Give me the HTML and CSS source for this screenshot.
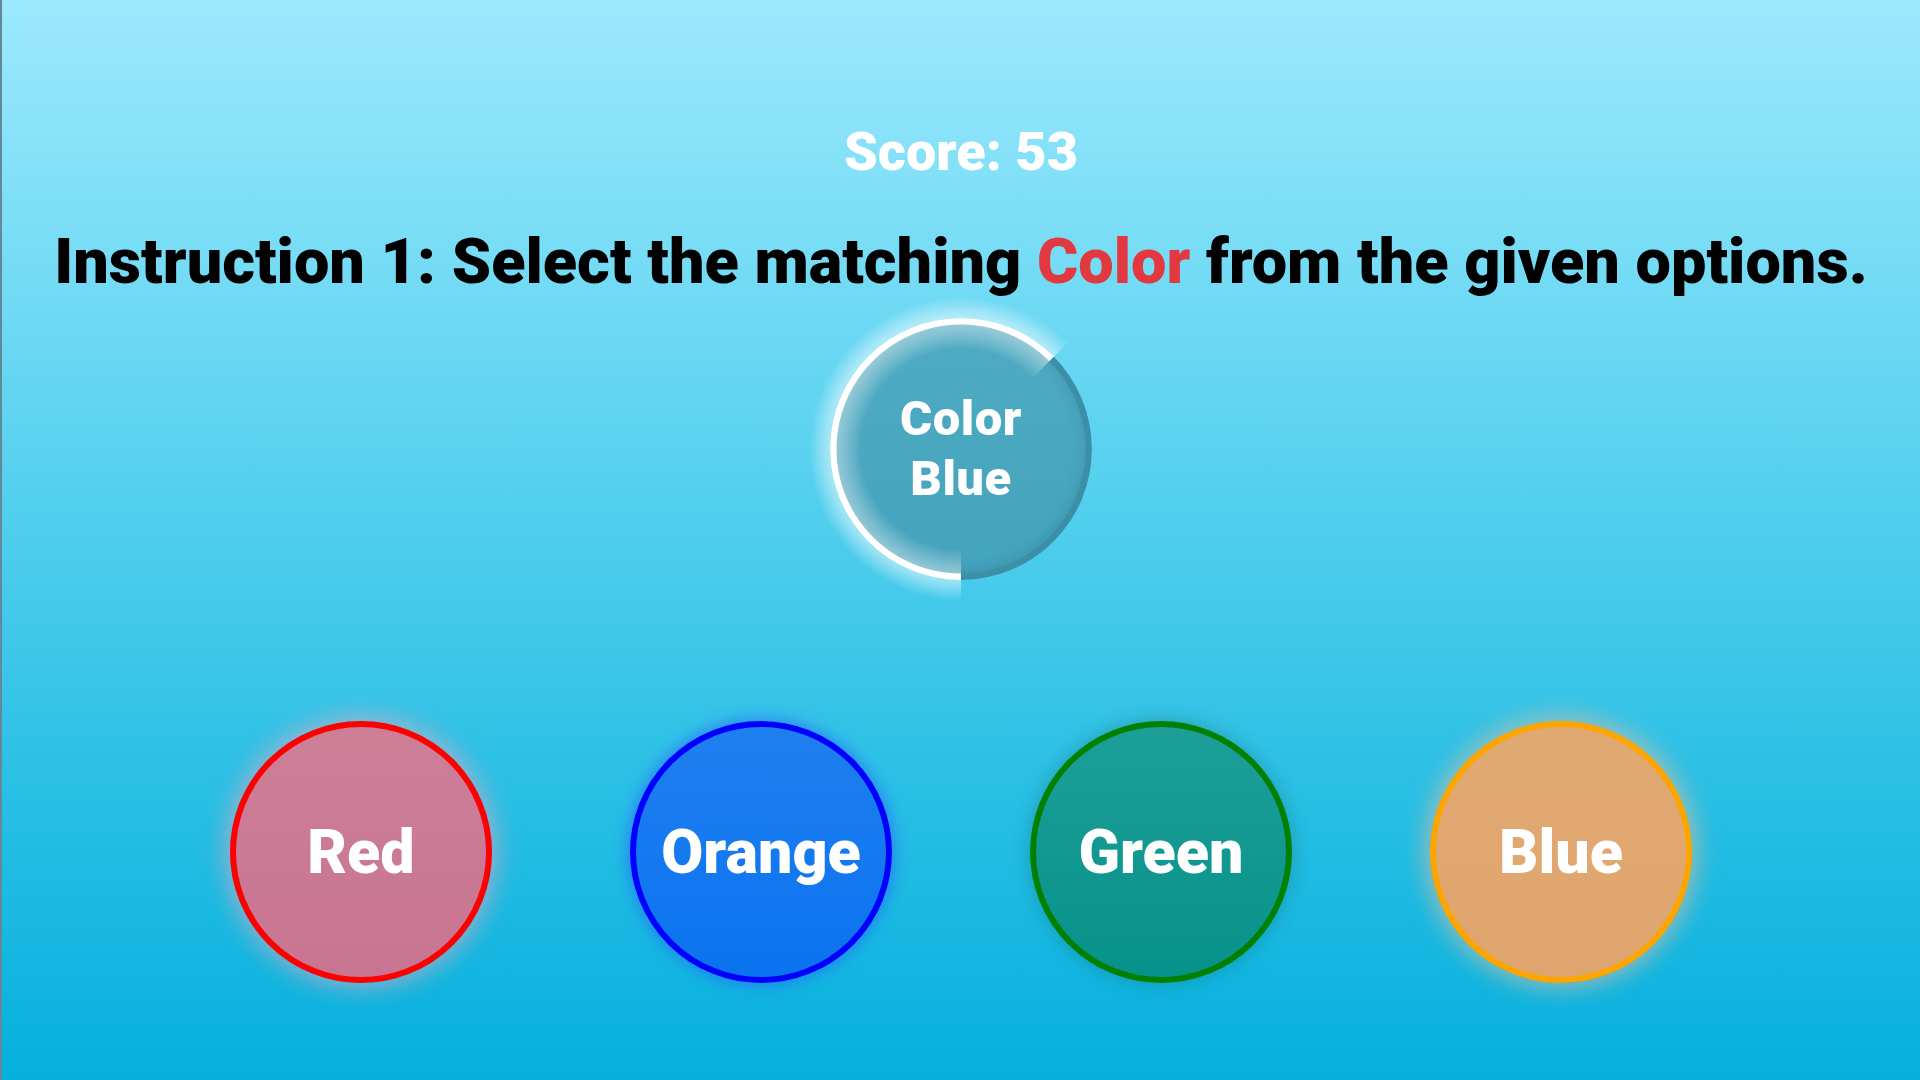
FILE: index.html
```html
<!DOCTYPE html>
<html lang="en">
<head>
<meta charset="utf-8">
<title>Color Match</title>
<link rel="stylesheet" href="styles.css">
</head>
<body>
<main class="game">
  <div class="score">Score: 53</div>
  <h1 class="instruction">Instruction 1: Select the matching <span class="hl">Color</span> from the given options.</h1>
  <div class="timer">
    <div class="timer-face">Color<br>Blue</div>
    <div class="timer-glow"></div>
    <div class="timer-ring"></div>
  </div>
  <div class="options">
    <button class="option opt-red">Red</button>
    <button class="option opt-blue">Orange</button>
    <button class="option opt-green">Green</button>
    <button class="option opt-orange">Blue</button>
  </div>
</main>
</body>
</html>
```
FILE: styles.css
```css
html, body {
  margin: 0;
  padding: 0;
  height: 100%;
}
body {
  box-sizing: border-box;
  min-height: 1080px;
  background: linear-gradient(180deg, #9ce9fd 0%, #5dd3f0 40%, #2ec1e6 70%, #05b0dd 100%);
  border-left: 2px solid #62899a;
  font-family: "Roboto", "Inter", "Liberation Sans", sans-serif;
  overflow: hidden;
}
.game {
  display: flex;
  flex-direction: column;
  align-items: center;
  padding-top: 122px;
}
.score {
  color: #ffffff;
  font-size: 54px;
  font-weight: 900;
  line-height: 60px;
  letter-spacing: 0;
}
.instruction {
  margin: 45px 0 0;
  color: #000000;
  font-size: 63px;
  font-weight: 900;
  line-height: 70px;
  letter-spacing: 0;
  white-space: nowrap;
}
.hl {
  color: #e1393f;
}
.timer {
  position: relative;
  width: 262px;
  height: 262px;
  margin-top: 21px;
}
.timer-face {
  position: absolute;
  inset: 6px;
  border-radius: 50%;
  background: linear-gradient(180deg, #4fabc3 0%, #44a3bd 100%);
  box-shadow: inset 0 0 14px rgba(20, 80, 100, 0.25);
  display: flex;
  align-items: center;
  justify-content: center;
  text-align: center;
  color: #ffffff;
  font-size: 49px;
  font-weight: 900;
  line-height: 60px;
  letter-spacing: 0.5px;
}
.timer-glow {
  position: absolute;
  inset: -34px;
  border-radius: 50%;
  background: conic-gradient(from 180deg, rgba(255, 255, 255, 0.85) 0deg 225deg, transparent 225deg 360deg);
  -webkit-mask: radial-gradient(circle closest-side, transparent 100px, rgba(0,0,0,0.6) 128px, rgba(0,0,0,0.5) 134px, transparent 152px);
  mask: radial-gradient(circle closest-side, transparent 100px, rgba(0,0,0,0.6) 128px, rgba(0,0,0,0.5) 134px, transparent 152px);
  pointer-events: none;
}
.timer-ring {
  position: absolute;
  inset: 0;
  border-radius: 50%;
  background: conic-gradient(from 180deg, #ffffff 0deg 225deg, #3b8fa6 225deg 360deg);
  -webkit-mask: radial-gradient(circle closest-side, transparent calc(100% - 7px), #000 calc(100% - 6px));
  mask: radial-gradient(circle closest-side, transparent calc(100% - 7px), #000 calc(100% - 6px));
}
.options {
  display: flex;
  gap: 138px;
  margin-top: 141px;
}
.option {
  box-sizing: border-box;
  width: 262px;
  height: 262px;
  border-radius: 50%;
  border: 6px solid;
  display: flex;
  align-items: center;
  justify-content: center;
  padding: 0;
  color: #ffffff;
  font-family: inherit;
  font-size: 61px;
  font-weight: 900;
  letter-spacing: 0;
  cursor: pointer;
}
.opt-red {
  border-color: #ff0000;
  background: linear-gradient(180deg, #cd7f98 0%, #c87591 100%);
  box-shadow: 0 0 22px 6px rgba(235, 170, 190, 0.55);
}
.opt-blue {
  border-color: #0000ff;
  background: linear-gradient(180deg, #1f7ff0 0%, #0b73f0 100%);
  box-shadow: 0 0 14px 3px rgba(40, 90, 255, 0.55);
}
.opt-green {
  border-color: #008000;
  background: linear-gradient(180deg, #1d9f98 0%, #06928a 100%);
  box-shadow: 0 0 16px 3px rgba(20, 90, 80, 0.25);
}
.opt-orange {
  border-color: #ffa500;
  background: linear-gradient(180deg, #e1a972 0%, #dfa56f 100%);
  box-shadow: 0 0 22px 6px rgba(225, 190, 160, 0.6);
}
```
